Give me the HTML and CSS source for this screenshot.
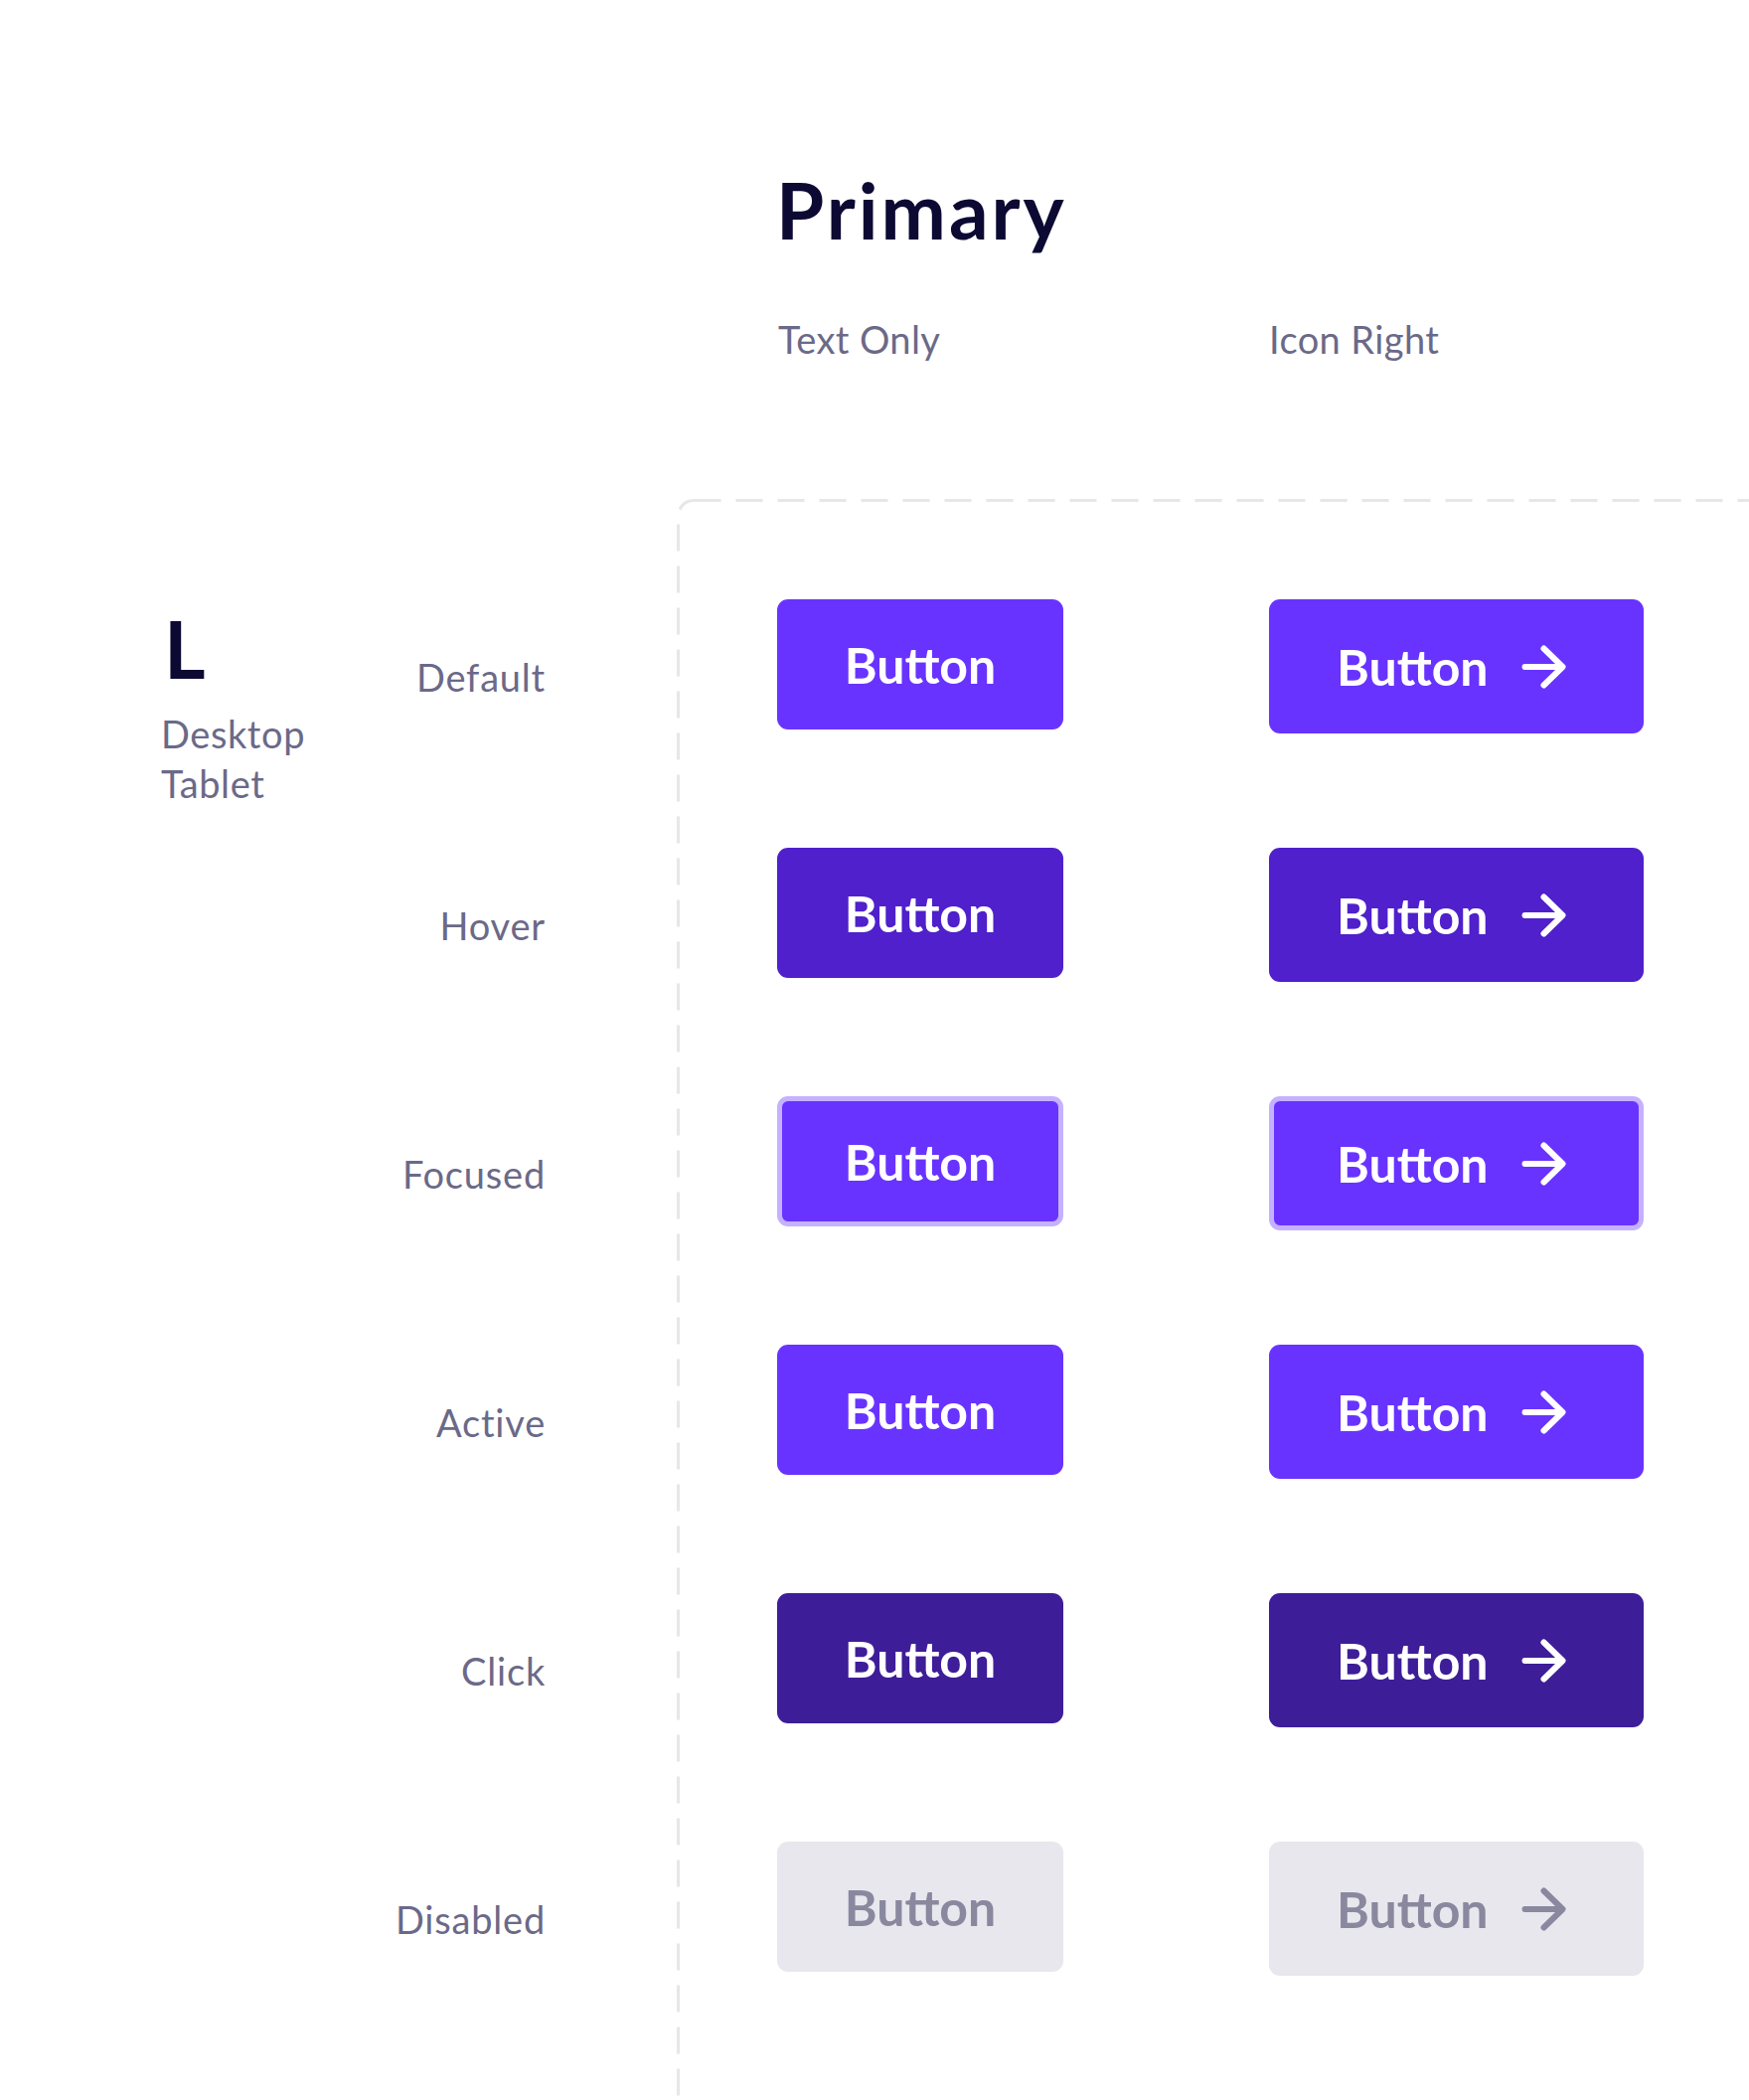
FILE: index.html
```html
<!DOCTYPE html>
<html lang="en">
<head>
<meta charset="utf-8">
<title>Primary Buttons</title>
<link rel="stylesheet" href="styles.css">
</head>
<body>
<div class="page">
  <header class="heading">
    <h1 class="title">Primary</h1>
    <div class="col-heads">
      <span class="col-head col-head-text">Text Only</span>
      <span class="col-head">Icon Right</span>
    </div>
  </header>

  <main class="board">
    <aside class="size">
      <div class="size-letter">L</div>
      <div class="size-devices">Desktop<br>Tablet</div>
    </aside>

    <div class="states">
      <div class="state"><span class="state-label">Default</span></div>
      <div class="state"><span class="state-label">Hover</span></div>
      <div class="state"><span class="state-label">Focused</span></div>
      <div class="state"><span class="state-label">Active</span></div>
      <div class="state"><span class="state-label">Click</span></div>
      <div class="state"><span class="state-label">Disabled</span></div>
    </div>

    <section class="panel">
      <svg class="panel-frame" width="100%" height="100%" aria-hidden="true">
        <rect x="1.5" y="1.5" width="2000" height="3000" rx="16" ry="16" fill="none" stroke="#e6e6eb" stroke-width="3" stroke-dasharray="27 15"/>
      </svg>

      <div class="row">
        <button class="btn btn-text is-default">Button</button>
        <button class="btn btn-icon is-default">Button
          <svg class="arrow" width="48" height="48" viewBox="0 0 48 48" aria-hidden="true"><path d="M5.5 24H43M24.5 5.5L43.5 24L24.5 42.5" fill="none" stroke="currentColor" stroke-width="6" stroke-linecap="round" stroke-linejoin="round"/></svg>
        </button>
      </div>
      <div class="row">
        <button class="btn btn-text is-hover">Button</button>
        <button class="btn btn-icon is-hover">Button
          <svg class="arrow" width="48" height="48" viewBox="0 0 48 48" aria-hidden="true"><path d="M5.5 24H43M24.5 5.5L43.5 24L24.5 42.5" fill="none" stroke="currentColor" stroke-width="6" stroke-linecap="round" stroke-linejoin="round"/></svg>
        </button>
      </div>
      <div class="row">
        <button class="btn btn-text is-focused">Button</button>
        <button class="btn btn-icon is-focused">Button
          <svg class="arrow" width="48" height="48" viewBox="0 0 48 48" aria-hidden="true"><path d="M5.5 24H43M24.5 5.5L43.5 24L24.5 42.5" fill="none" stroke="currentColor" stroke-width="6" stroke-linecap="round" stroke-linejoin="round"/></svg>
        </button>
      </div>
      <div class="row">
        <button class="btn btn-text is-default">Button</button>
        <button class="btn btn-icon is-default">Button
          <svg class="arrow" width="48" height="48" viewBox="0 0 48 48" aria-hidden="true"><path d="M5.5 24H43M24.5 5.5L43.5 24L24.5 42.5" fill="none" stroke="currentColor" stroke-width="6" stroke-linecap="round" stroke-linejoin="round"/></svg>
        </button>
      </div>
      <div class="row">
        <button class="btn btn-text is-click">Button</button>
        <button class="btn btn-icon is-click">Button
          <svg class="arrow" width="48" height="48" viewBox="0 0 48 48" aria-hidden="true"><path d="M5.5 24H43M24.5 5.5L43.5 24L24.5 42.5" fill="none" stroke="currentColor" stroke-width="6" stroke-linecap="round" stroke-linejoin="round"/></svg>
        </button>
      </div>
      <div class="row">
        <button class="btn btn-text is-disabled">Button</button>
        <button class="btn btn-icon is-disabled">Button
          <svg class="arrow" width="48" height="48" viewBox="0 0 48 48" aria-hidden="true"><path d="M5.5 24H43M24.5 5.5L43.5 24L24.5 42.5" fill="none" stroke="currentColor" stroke-width="6" stroke-linecap="round" stroke-linejoin="round"/></svg>
        </button>
      </div>
    </section>
  </main>
</div>
</body>
</html>
```

FILE: styles.css
```css
* {
  box-sizing: border-box;
}

html, body {
  margin: 0;
  padding: 0;
  background: #ffffff;
}

body {
  font-family: "Lato", "Noto Sans", "Liberation Sans", sans-serif;
  color: #6b6988;
}

.page {
  width: 1760px;
  height: 2113px;
  overflow: hidden;
  padding-top: 171px;
}

/* ---------- heading ---------- */
.heading {
  padding-left: 781px;
}

.title {
  margin: 0;
  font-size: 78px;
  line-height: 80px;
  font-weight: 700;
  color: #0c0a33;
  letter-spacing: 3px;
}

.col-heads {
  display: flex;
  margin-top: 66px;
  padding-left: 2px;
}

.col-head {
  font-size: 38px;
  line-height: 48px;
  font-weight: 400;
  color: #6b6988;
  letter-spacing: 0.4px;
}

.col-head-text {
  width: 494px;
}

/* ---------- board ---------- */
.board {
  display: flex;
  margin-top: 137px;
  padding-left: 165px;
  height: 1700px;
}

.size {
  width: 135px;
  flex: none;
  padding-top: 110px;
}

.size-letter {
  font-size: 80px;
  line-height: 80px;
  font-weight: 700;
  color: #0c0a33;
  margin-left: 0;
}

.size-devices {
  margin-top: 21px;
  margin-left: -3px;
  font-size: 38px;
  line-height: 50px;
  color: #6b6988;
  letter-spacing: 0.6px;
}

.states {
  width: 249px;
  flex: none;
  padding-top: 101px;
  text-align: right;
}

.state {
  height: 250px;
  padding-top: 54px;
}

.state-label {
  display: block;
  font-size: 38px;
  line-height: 48px;
  color: #6b6988;
  letter-spacing: 0.8px;
}

/* ---------- panel ---------- */
.panel {
  position: relative;
  flex: 1;
  margin-left: 132px;
  padding-top: 101px;
  padding-left: 101px;
}

.panel-frame {
  position: absolute;
  left: 0;
  top: 0;
  pointer-events: none;
}

.row {
  position: relative;
  display: flex;
  align-items: flex-start;
  gap: 207px;
  height: 250px;
}

/* ---------- buttons ---------- */
.btn {
  display: flex;
  align-items: center;
  border: 0;
  margin: 0;
  border-radius: 11px;
  font-family: "Lato", "Noto Sans", "Liberation Sans", sans-serif;
  font-size: 50px;
  line-height: 60px;
  font-weight: 700;
  color: #ffffff;
  background: #6933ff;
  cursor: pointer;
}

.btn-text {
  width: 288px;
  height: 131px;
  justify-content: center;
  padding: 0;
}

.btn-icon {
  width: 377px;
  height: 135px;
  justify-content: flex-start;
  padding: 0 0 0 68px;
  gap: 31px;
}

.arrow {
  display: block;
  flex: none;
}

.is-default {
  background: #6933ff;
}

.is-hover {
  background: #4f20cb;
}

.is-focused {
  background: #6933ff;
  border: 5px solid #c4b1ff;
}

.btn-icon.is-focused {
  padding-left: 63px;
}

.is-click {
  background: #3e1d98;
}

.is-disabled {
  background: #e8e7ed;
  color: #8a889f;
  cursor: default;
}
```
